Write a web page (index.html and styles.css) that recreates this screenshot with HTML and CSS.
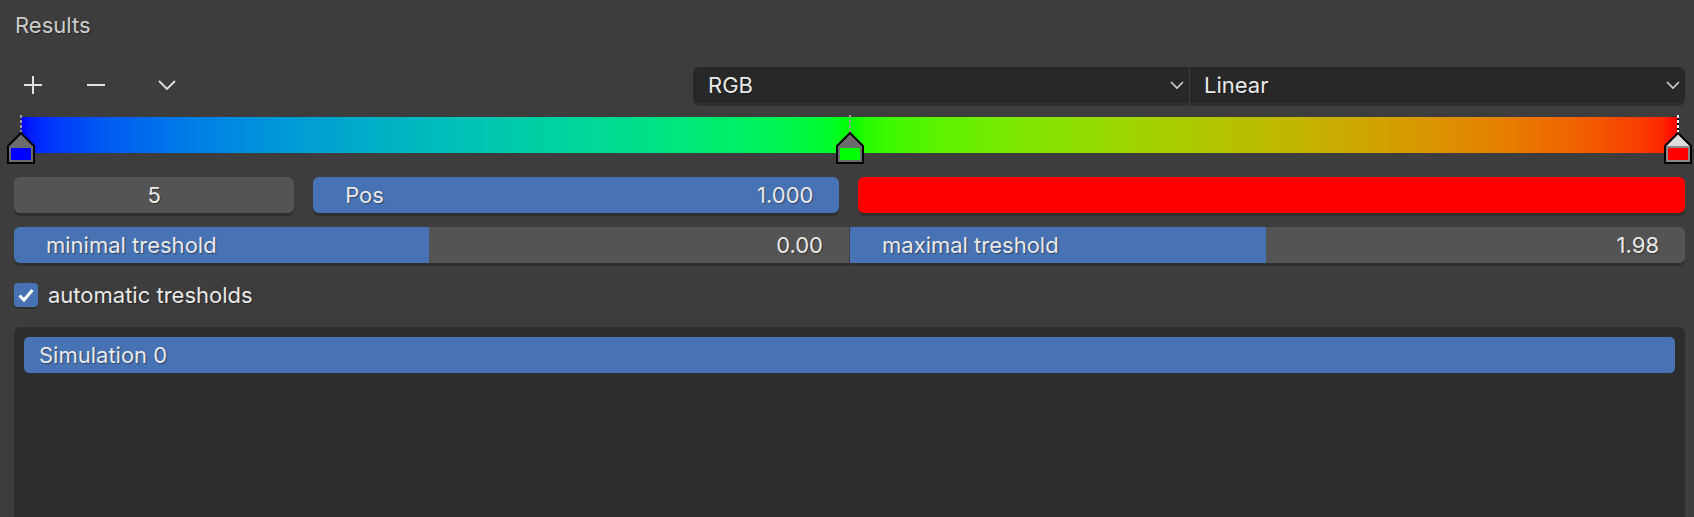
FILE: index.html
```html
<!DOCTYPE html>
<html lang="en">
<head>
  <meta charset="UTF-8">
  <title>Results</title>
  <link rel="stylesheet" href="styles.css">
</head>
<body>
  <div class="panel">
    <div class="panel-title">Results</div>

    <div class="toolbar">
      <div class="tool-buttons">
        <div class="tool-btn">
          <svg width="18" height="18" viewBox="0 0 18 18"><path d="M9 0V18M0 9H18" stroke="#e2e2e2" stroke-width="2" fill="none"/></svg>
        </div>
        <div class="tool-btn">
          <svg width="18" height="18" viewBox="0 0 18 18"><path d="M0 9H18" stroke="#e2e2e2" stroke-width="2" fill="none"/></svg>
        </div>
        <div class="tool-btn tool-menu">
          <svg width="18" height="10" viewBox="0 0 18 10"><path d="M1 1L9 9L17 1" stroke="#e2e2e2" stroke-width="1.8" fill="none"/></svg>
        </div>
      </div>
      <div class="dropdowns">
        <div class="dropdown">
          <span>RGB</span>
          <svg width="14" height="9" viewBox="0 0 14 9"><path d="M1 1L7 7L13 1" stroke="#d0d0d0" stroke-width="1.6" fill="none"/></svg>
        </div>
        <div class="dropdown">
          <span>Linear</span>
          <svg width="14" height="9" viewBox="0 0 14 9"><path d="M1 1L7 7L13 1" stroke="#d0d0d0" stroke-width="1.6" fill="none"/></svg>
        </div>
      </div>
    </div>

    <div class="ramp">
      <div class="marker" style="left: 0%">
        <svg width="28" height="50" viewBox="0 0 28 50">
          <path d="M14 0V18" stroke="#9a9a9a" stroke-width="2" stroke-dasharray="3 2"/>
          <path d="M14 18L27 31V48H1V31Z" fill="#6c6c6c" stroke="#000" stroke-width="2"/>
          <rect x="2" y="31" width="24" height="16" fill="#6c6c6c"/>
          <rect x="4" y="33" width="20" height="12" fill="#0000ff"/>
        </svg>
      </div>
      <div class="marker" style="left: 50%">
        <svg width="28" height="50" viewBox="0 0 28 50">
          <path d="M14 0V18" stroke="#9a9a9a" stroke-width="2" stroke-dasharray="3 2"/>
          <path d="M14 18L27 31V48H1V31Z" fill="#6c6c6c" stroke="#000" stroke-width="2"/>
          <rect x="2" y="31" width="24" height="16" fill="#6c6c6c"/>
          <rect x="4" y="33" width="20" height="12" fill="#00ff00"/>
        </svg>
      </div>
      <div class="marker" style="left: 100%">
        <svg width="28" height="50" viewBox="0 0 28 50">
          <path d="M14 0V18" stroke="#000" stroke-width="2"/>
          <path d="M14 0V18" stroke="#fff" stroke-width="2" stroke-dasharray="3 2"/>
          <path d="M14 18L27 31V48H1V31Z" fill="#dcdcdc" stroke="#000" stroke-width="2"/>
          <rect x="2" y="31" width="24" height="16" fill="#8a8a8a"/>
          <rect x="4" y="33" width="20" height="12" fill="#ff0000"/>
        </svg>
      </div>
    </div>

    <div class="stop-row">
      <div class="field field-num">5</div>
      <div class="field field-pos"><span>Pos</span><span>1.000</span></div>
      <div class="field swatch"></div>
    </div>

    <div class="threshold-row">
      <div class="slider slider-left" style="--fill: 49.7%"><span>minimal treshold</span><span>0.00</span></div>
      <div class="slider slider-right" style="--fill: 49.8%"><span>maximal treshold</span><span>1.98</span></div>
    </div>

    <label class="check-row">
      <span class="checkbox">
        <svg width="24" height="24" viewBox="0 0 24 24"><path d="M5.5 12.5L10 17L18.5 7" stroke="#fff" stroke-width="3" fill="none"/></svg>
      </span>
      <span>automatic tresholds</span>
    </label>

    <div class="list">
      <div class="list-item active">Simulation 0</div>
    </div>
  </div>
</body>
</html>
```

FILE: styles.css
```css
body {
  margin: 0;
  background-color: #3d3d3d;
  font-family: Inter, "Noto Sans", sans-serif;
  font-size: 22px;
  color: #eaeaea;
  overflow: hidden;
}

.panel {
  padding: 0 9px 0 14px;
}

.panel-title {
  height: 50px;
  line-height: 50px;
  padding-left: 1px;
  color: #cccccc;
  text-shadow: 1px 1px 1px rgba(0, 0, 0, 0.4);
}

/* toolbar: + - menu and the two dropdowns */
.toolbar {
  display: flex;
  height: 36px;
  margin-top: 17px;
}

.tool-buttons {
  flex: 1;
  display: flex;
  align-items: center;
}

.tool-btn {
  width: 38px;
  height: 36px;
  display: flex;
  align-items: center;
  justify-content: center;
}

.tool-btn + .tool-btn {
  margin-left: 25px;
}

.tool-btn.tool-menu {
  margin-left: 33px;
}

.dropdowns {
  width: 992px;
  display: flex;
  gap: 1px;
}

.dropdown {
  flex: 1;
  display: flex;
  align-items: center;
  justify-content: space-between;
  padding: 0 5px 0 15px;
  background-color: #282828;
  box-shadow: 0 3px 0 rgba(0, 0, 0, 0.2);
  text-shadow: 1px 1px 1px rgba(0, 0, 0, 0.4);
}

.dropdown:first-child {
  border-radius: 6px 0 0 6px;
}

.dropdown:last-child {
  border-radius: 0 6px 6px 0;
  padding-left: 14px;
}

/* color ramp, interpolated in linear space */
.ramp {
  position: relative;
  height: 36px;
  margin: 14px 7px 0;
  background: linear-gradient(to right,
    rgb(0, 0, 255) 0%,
    rgb(0, 25, 254) 0.5%,
    rgb(0, 39, 253) 1%,
    rgb(0, 63, 249) 2.5%,
    rgb(0, 89, 243) 5%,
    rgb(0, 124, 231) 10%,
    rgb(0, 149, 218) 15%,
    rgb(0, 170, 203) 20%,
    rgb(0, 188, 188) 25%,
    rgb(0, 203, 170) 30%,
    rgb(0, 218, 149) 35%,
    rgb(0, 231, 124) 40%,
    rgb(0, 243, 89) 45%,
    rgb(0, 249, 63) 47.5%,
    rgb(0, 253, 39) 49%,
    rgb(0, 255, 0) 50%,
    rgb(39, 253, 0) 51%,
    rgb(63, 249, 0) 52.5%,
    rgb(89, 243, 0) 55%,
    rgb(124, 231, 0) 60%,
    rgb(149, 218, 0) 65%,
    rgb(170, 203, 0) 70%,
    rgb(188, 188, 0) 75%,
    rgb(203, 170, 0) 80%,
    rgb(218, 149, 0) 85%,
    rgb(231, 124, 0) 90%,
    rgb(243, 89, 0) 95%,
    rgb(249, 63, 0) 97.5%,
    rgb(253, 39, 0) 99%,
    rgb(255, 0, 0) 100%);
}

.marker {
  position: absolute;
  top: -2px;
  width: 28px;
  height: 50px;
  margin-left: -14px;
}

.marker svg {
  display: block;
}

/* fields */
.stop-row {
  display: grid;
  grid-template-columns: 280fr 526fr 826fr;
  gap: 19px;
  margin-top: 24px;
}

.field {
  height: 36px;
  display: flex;
  align-items: center;
  border-radius: 6px;
  background-color: #545454;
  box-shadow: 0 3px 0 rgba(0, 0, 0, 0.2);
  text-shadow: 1px 1px 1px rgba(0, 0, 0, 0.4);
}

.field-num {
  justify-content: center;
}

.field-pos {
  justify-content: space-between;
  padding: 0 26px 0 32px;
  background-color: #4772b3;
}

.swatch {
  background-color: #ff0000;
}

.threshold-row {
  display: flex;
  gap: 1px;
  margin-top: 14px;
}

.slider {
  flex: 1;
  height: 36px;
  display: flex;
  align-items: center;
  justify-content: space-between;
  padding: 0 26px 0 32px;
  background: linear-gradient(to right, #4772b3 var(--fill), #545454 var(--fill));
  box-shadow: 0 3px 0 rgba(0, 0, 0, 0.2);
  text-shadow: 1px 1px 1px rgba(0, 0, 0, 0.4);
}

.slider-left {
  border-radius: 6px 0 0 6px;
}

.slider-right {
  border-radius: 0 6px 6px 0;
}

.check-row {
  display: flex;
  align-items: center;
  gap: 10px;
  height: 24px;
  margin-top: 20px;
  text-shadow: 1px 1px 1px rgba(0, 0, 0, 0.4);
}

.checkbox {
  width: 24px;
  height: 24px;
  border-radius: 4px;
  background-color: #4772b3;
  box-shadow: 0 2px 0 rgba(0, 0, 0, 0.2);
}

.checkbox svg {
  display: block;
}

/* list */
.list {
  box-sizing: border-box;
  height: 190px;
  margin-top: 20px;
  padding: 10px;
  border-radius: 6px 6px 0 0;
  background-color: #2d2d2d;
}

.list-item {
  height: 36px;
  display: flex;
  align-items: center;
  padding-left: 15px;
  border-radius: 5px;
  text-shadow: 1px 1px 1px rgba(0, 0, 0, 0.4);
}

.list-item.active {
  background-color: #4772b3;
}
```
